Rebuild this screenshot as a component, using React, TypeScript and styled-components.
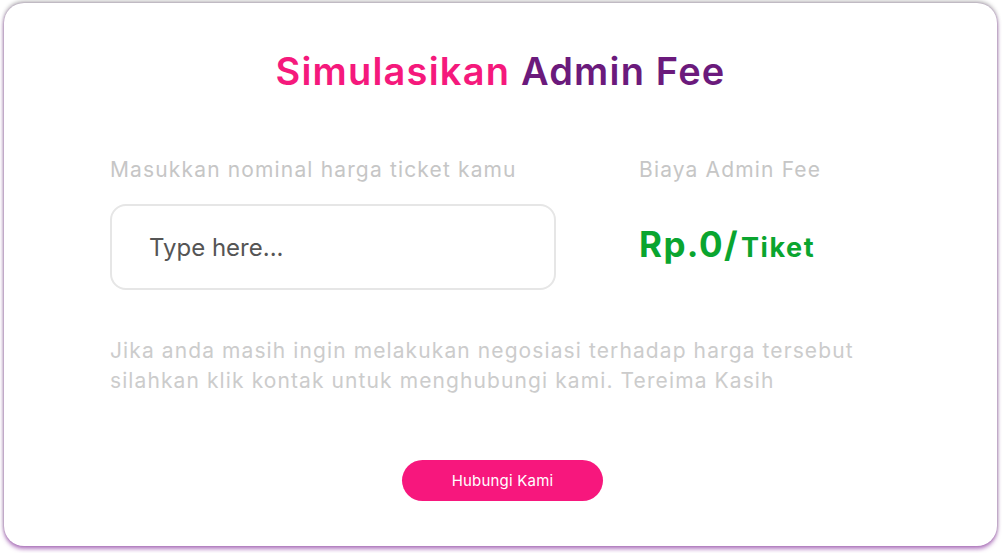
import React from "react";
import styled, { createGlobalStyle } from "styled-components";

const Global = createGlobalStyle`
  html, body { margin: 0; padding: 0; background: #ffffff; }
  body { font-family: "Inter", "Noto Sans", sans-serif; }
  * { box-sizing: border-box; }
`;

const Page = styled.div`
  padding: 3px 5px 7px 4px;
`;

const Card = styled.section`
  height: 543px;
  border-radius: 20px;
  background: #ffffff;
  box-shadow: 0 -2px 4px rgba(0, 0, 0, 0.28), 0 3px 4px rgba(150, 70, 170, 0.7),
    0 0 2px rgba(170, 110, 200, 0.35);
  padding: 42px 0 0 106px;
  display: flex;
  flex-direction: column;
`;

const Title = styled.h1`
  margin: 0 0 0 -106px;
  text-align: center;
  font-family: "Inter", sans-serif;
  font-weight: 600;
  font-size: 38px;
  line-height: 52px;
  letter-spacing: 1.2px;
`;

const Tone = styled.span<{ $c: string }>`
  color: ${(p) => p.$c};
`;

const Row = styled.div`
  display: flex;
  gap: 83px;
  margin-top: 58px;
`;

const Column = styled.div<{ $w?: number }>`
  display: flex;
  flex-direction: column;
  width: ${(p) => (p.$w ? `${p.$w}px` : "auto")};
`;

const Label = styled.div`
  font-family: "Inter", sans-serif;
  font-size: 21px;
  line-height: 30px;
  letter-spacing: 1.15px;
  color: #c6c6c6;
  font-weight: 400;
`;

const Input = styled.input`
  margin-top: 19px;
  width: 446px;
  height: 86px;
  border: 2px solid #e6e6e6;
  border-radius: 16px;
  padding: 0 0 0 37px;
  font-family: "Inter", sans-serif;
  font-size: 24px;
  color: #555;
  outline: none;
  &::placeholder { color: #555555; }
`;

const Fee = styled.div`
  margin-top: 36px;
  color: #0aa52f;
  font-family: "Inter", sans-serif;
  font-weight: 700;
  font-size: 35px;
  line-height: 46px;
  letter-spacing: 1.4px;
`;

const FeeUnit = styled.span`
  margin-left: 2px;
  font-size: 27px;
  font-weight: 700;
  letter-spacing: 1.6px;
`;

const Note = styled.p`
  margin: 46px 0 0 0;
  width: 800px;
  font-family: "Inter", sans-serif;
  font-size: 21px;
  line-height: 30px;
  letter-spacing: 1.1px;
  color: #cccccc;
`;

const ButtonRow = styled.div`
  display: flex;
  justify-content: center;
  margin: 64px 0 0 -102px;
`;

const Button = styled.button`
  width: 201px;
  height: 41px;
  border: none;
  border-radius: 21px;
  background: #f7177d;
  color: #ffffff;
  font-family: "Inter", sans-serif;
  font-size: 15px;
  letter-spacing: 0.2px;
  cursor: pointer;
`;

export default function App() {
  return (
    <Page>
      <Global />
      <Card>
        <Title>
          <Tone $c="#f5197c">Simulasikan</Tone> <Tone $c="#6b1a7c">Admin Fee</Tone>
        </Title>
        <Row>
          <Column $w={446}>
            <Label>Masukkan nominal harga ticket kamu</Label>
            <Input placeholder="Type here..." />
          </Column>
          <Column>
            <Label>Biaya Admin Fee</Label>
            <Fee>
              Rp.0/<FeeUnit>Tiket</FeeUnit>
            </Fee>
          </Column>
        </Row>
        <Note>
          Jika anda masih ingin melakukan negosiasi terhadap harga tersebut silahkan klik kontak
          untuk menghubungi kami. Tereima Kasih
        </Note>
        <ButtonRow>
          <Button>Hubungi Kami</Button>
        </ButtonRow>
      </Card>
    </Page>
  );
}
